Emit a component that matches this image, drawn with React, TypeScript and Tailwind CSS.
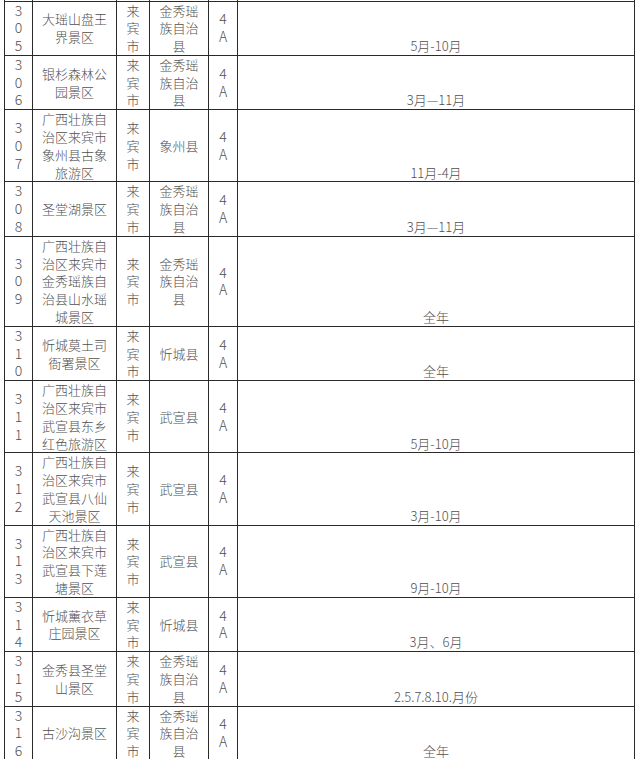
// 景区名录表格片段（305-316），从截图还原
const rows = [
    { no: "305", name: "大瑶山盘王界景区", county: "金秀瑶族自治县", season: "5月-10月" },
    { no: "306", name: "银杉森林公园景区", county: "金秀瑶族自治县", season: "3月—11月" },
    { no: "307", name: "广西壮族自治区来宾市象州县古象旅游区", county: "象州县", season: "11月-4月" },
    { no: "308", name: "圣堂湖景区", county: "金秀瑶族自治县", season: "3月—11月" },
    { no: "309", name: "广西壮族自治区来宾市金秀瑶族自治县山水瑶城景区", county: "金秀瑶族自治县", season: "全年" },
    { no: "310", name: "忻城莫土司衙署景区", county: "忻城县", season: "全年" },
    { no: "311", name: "广西壮族自治区来宾市武宣县东乡红色旅游区", county: "武宣县", season: "5月-10月" },
    { no: "312", name: "广西壮族自治区来宾市武宣县八仙天池景区", county: "武宣县", season: "3月-10月" },
    { no: "313", name: "广西壮族自治区来宾市武宣县下莲塘景区", county: "武宣县", season: "9月-10月" },
    { no: "314", name: "忻城薰衣草庄园景区", county: "忻城县", season: "3月、6月" },
    { no: "315", name: "金秀县圣堂山景区", county: "金秀瑶族自治县", season: "2.5.7.8.10.月份" },
    { no: "316", name: "古沙沟景区", county: "金秀瑶族自治县", season: "全年" },
];

const cell = "border border-[#2a2a2a] align-middle text-center";

const Stack = ({ text }: { text: string }) => (
    <div className="flex flex-col items-center">
        {text.split("").map((c, i) => (
            <span key={i}>{c}</span>
        ))}
    </div>
);

export default function App() {
    return (
        <div className="bg-white w-[640px] h-[759px] overflow-hidden pl-[4px]">
            <table
                className="table-fixed border-collapse w-[631px] text-[13px] leading-[17.8px] font-light text-[#505050]"
                style={{ fontFamily: '"Noto Sans CJK SC", "Noto Sans", sans-serif' }}
            >
                <colgroup>
                    <col className="w-[28px]" />
                    <col className="w-[84px]" />
                    <col className="w-[33px]" />
                    <col className="w-[59px]" />
                    <col className="w-[29px]" />
                    <col />
                </colgroup>
                <tbody>
                    <tr className="h-[1px]">
                        {[0, 1, 2, 3, 4, 5].map((i) => (
                            <td key={i} className="border-x border-[#2a2a2a] p-0 h-[1px]" />
                        ))}
                    </tr>
                    {rows.map((r) => (
                        <tr key={r.no}>
                            <td className={`${cell} p-0 text-[14px]`}>
                                <Stack text={r.no} />
                            </td>
                            <td className={`${cell} px-[8px] py-0`}>{r.name}</td>
                            <td className={`${cell} p-0`}>
                                <Stack text="来宾市" />
                            </td>
                            <td className={`${cell} px-[6px] py-0`}>{r.county}</td>
                            <td className={`${cell} p-0 text-[14px]`}>
                                <Stack text="4A" />
                            </td>
                            <td className="border border-[#2a2a2a] align-bottom text-center p-0">{r.season}</td>
                        </tr>
                    ))}
                </tbody>
            </table>
        </div>
    );
}
